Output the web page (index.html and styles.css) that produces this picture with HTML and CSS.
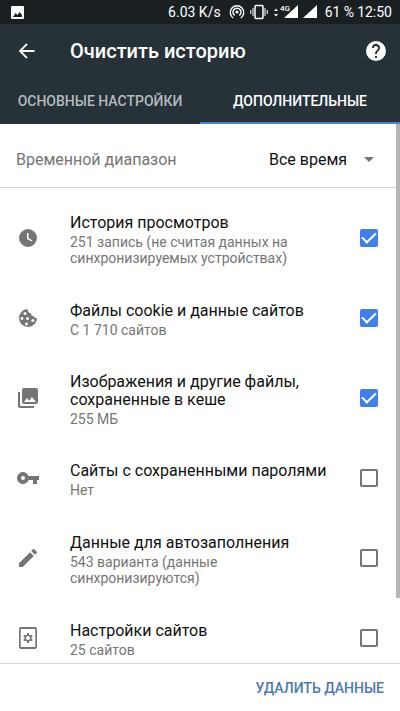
FILE: index.html
```html
<!DOCTYPE html>
<html lang="ru">
<head>
  <meta charset="UTF-8">
  <meta name="viewport" content="width=device-width, initial-scale=1">
  <title>Очистить историю</title>
  <link rel="stylesheet" href="styles.css">
</head>
<body>

  <div class="status">
    <svg class="status-picture" viewBox="0 0 13 13" width="13" height="13"><path fill="#fff" fill-rule="evenodd" d="M1 0h11a1 1 0 0 1 1 1v11a1 1 0 0 1-1 1H1a1 1 0 0 1-1-1V1a1 1 0 0 1 1-1zM2 11h9V9L8.500 6 6.500 9 4.500 7z"/></svg>
    <span>6.03 K/s</span>
    <div class="signals">
      <svg viewBox="0 0 16 16" width="16" height="16" fill="none" stroke="#fff" stroke-width="1.400"><circle cx="8" cy="8" r="1.600" fill="#fff" stroke="none"/><path d="M5.700 11.500a4 4 0 1 1 4.600 0M4.200 14a6.700 6.700 0 1 1 7.600 0"/></svg>
      <svg viewBox="0 0 18 16" width="18" height="16" fill="none" stroke="#fff"><rect x="5" y="1.500" width="8" height="13" rx="1" stroke-width="1.500"/><path d="M3 4v8M.8 6v4M15 4v8M17.200 6v4"/></svg>
      <svg viewBox="0 0 25 16" width="25" height="16" fill="#fff"><path d="M1 7l2-2.500L5 7zM1 10l2 2.500L5 10zM25 1v13H11z"/><path d="M7 0h10v8H7z" fill="#1a2022"/><text x="7" y="7" class="network">4G</text></svg>
      <svg viewBox="0 0 14 16" width="14" height="16"><path fill="#fff" d="M14 1v13H0z"/></svg>
    </div>
    <div class="clock">
      <span>61 %</span>
      <span>12:50</span>
    </div>
  </div>

  <header class="header">
    <div class="toolbar">
      <button class="icon-button" aria-label="Назад">
        <svg viewBox="0 0 16 16" width="16" height="16" fill="none" stroke="#fff" stroke-width="1.800"><path d="M15.500 8H1.500M8 1L1 8l7 7"/></svg>
      </button>
      <h1>Очистить историю</h1>
      <button class="icon-button" aria-label="Справка">
        <svg viewBox="2 2 20 20" width="20" height="20"><path fill="#fff" d="M12 2a10 10 0 1 0 0 20 10 10 0 0 0 0-20zm1 17h-2v-2h2v2zm2.070-7.750l-.9.920C13.450 12.900 13 13.500 13 15h-2v-.5c0-1.100.450-2.100 1.170-2.830l1.240-1.260A2 2 0 1 0 10 9H8a4 4 0 1 1 7.070 2.250z"/></svg>
      </button>
    </div>
    <nav class="tabs">
      <a href="#basic">Основные настройки</a>
      <a href="#advanced" class="active">Дополнительные</a>
    </nav>
  </header>

  <main class="content">
    <div class="scroll">
      <div class="range">
        <label for="range">Временной диапазон</label>
        <div class="select">
          <select id="range">
            <option>Все время</option>
          </select>
          <svg viewBox="0 0 10 5" width="10" height="5"><path fill="#757575" d="M0 0h10L5 5z"/></svg>
        </div>
      </div>

      <div class="list">
        <label class="row">
          <svg class="icon" viewBox="0 0 24 24"><path fill-rule="evenodd" d="M12 3a9 9 0 1 0 0 18 9 9 0 0 0 0-18zm-1 4h1.500v5l4 2.400-.8 1.200L11 13z"/></svg>
          <span class="text">
            <span class="title">История просмотров</span>
            <span class="sub">251 запись (не считая данных на синхронизируемых устройствах)</span>
          </span>
          <input type="checkbox" checked>
        </label>
        <label class="row">
          <svg class="icon" viewBox="0 0 24 24"><path d="M11.500 3a9 9 0 1 0 9.500 9c-1.500.5-2.800-.2-3-1.800-2 .3-3.300-1-2.800-2.900-2.200.1-3.600-1.800-3.700-4.300z"/><g fill="#fff"><circle cx="9" cy="7.500" r="1.500"/><circle cx="6" cy="12.500" r="1.400"/><circle cx="11.500" cy="12.500" r="1.500"/><circle cx="10.500" cy="18" r="1.400"/><circle cx="16.800" cy="14.500" r="1.500"/></g></svg>
          <span class="text">
            <span class="title">Файлы cookie и данные сайтов</span>
            <span class="sub">С 1 710 сайтов</span>
          </span>
          <input type="checkbox" checked>
        </label>
        <label class="row">
          <svg class="icon" viewBox="0 0 24 24"><path d="M22 16V4a2 2 0 0 0-2-2H8a2 2 0 0 0-2 2v12c0 1.100.9 2 2 2h12a2 2 0 0 0 2-2zm-11-4l2.030 2.710L16 11l4 5H8l3-4zM2 6v14c0 1.100.9 2 2 2h14v-2H4V6H2z"/></svg>
          <span class="text">
            <span class="title">Изображения и другие файлы, сохраненные в кеше</span>
            <span class="sub">255 МБ</span>
          </span>
          <input type="checkbox" checked>
        </label>
        <label class="row">
          <svg class="icon" viewBox="0 0 24 24"><path d="M12.650 10A6 6 0 1 0 12.650 14H17v4h4v-4h2v-4H12.650zM7 14a2 2 0 1 1 0-4 2 2 0 0 1 0 4z"/></svg>
          <span class="text">
            <span class="title">Сайты с сохраненными паролями</span>
            <span class="sub">Нет</span>
          </span>
          <input type="checkbox">
        </label>
        <label class="row">
          <svg class="icon" viewBox="0 0 24 24"><path d="M3 17.250V21h3.750L17.810 9.940l-3.750-3.750L3 17.250zM20.710 7.040a1 1 0 0 0 0-1.410l-2.340-2.340a1 1 0 0 0-1.410 0l-1.830 1.830 3.750 3.750 1.830-1.830z"/></svg>
          <span class="text">
            <span class="title">Данные для автозаполнения</span>
            <span class="sub">543 варианта (данные синхронизируются)</span>
          </span>
          <input type="checkbox">
        </label>
        <label class="row">
          <svg class="icon" viewBox="0 0 24 24"><path fill-rule="evenodd" d="M5 1h14a2 2 0 0 1 2 2v18a2 2 0 0 1-2 2H5a2 2 0 0 1-2-2V3c0-1.100.9-2 2-2zm-.3 1.900v18.200h14.600V2.900z"/><circle cx="12" cy="12" r="2.800" fill="none" stroke="#757575" stroke-width="1.600"/><path fill="none" stroke="#757575" stroke-width="2" d="M12 7v2M12 15v2M7.700 9.500l1.700 1M14.600 13.500l1.700 1M7.700 14.500l1.700-1M14.600 10.500l1.700-1"/></svg>
          <span class="text">
            <span class="title">Настройки сайтов</span>
            <span class="sub">25 сайтов</span>
          </span>
          <input type="checkbox">
        </label>
      </div>
    </div>
    <div class="scrollbar"></div>
  </main>

  <footer class="footer">
    <button class="delete">Удалить данные</button>
  </footer>

</body>
</html>
```
FILE: styles.css
```css
* {
  box-sizing: border-box;
}

body {
  margin: 0;
  height: 100vh;
  display: flex;
  flex-direction: column;
  background: #fff;
  color: #212121;
  font-family: Roboto, "Noto Sans", sans-serif;
}

svg {
  display: block;
  flex: none;
}

button {
  padding: 0;
  border: none;
  background: none;
  font-family: inherit;
  cursor: pointer;
}

.status {
  display: flex;
  align-items: center;
  gap: 8px;
  height: 24px;
  padding: 0 8px 0 11px;
  background: #1a2022;
  color: #fff;
  font-size: 14px;
}

.status-picture {
  margin-right: auto;
}

.signals {
  display: flex;
  gap: 5px;
}

.network {
  font-size: 8px;
  font-weight: 500;
}

.clock {
  display: flex;
  gap: 3px;
}

.header {
  background: #263238;
}

.toolbar {
  display: flex;
  align-items: center;
  height: 54px;
  padding: 0 14px 0 19px;
}

.toolbar h1 {
  flex: 1;
  margin: 0 0 0 35px;
  color: #fff;
  font-size: 20px;
  font-weight: 500;
}

.tabs {
  display: grid;
  grid-template-columns: 1fr 1fr;
  height: 46px;
}

.tabs a {
  display: flex;
  align-items: center;
  justify-content: center;
  border-top: 2px solid transparent;
  border-bottom: 2px solid transparent;
  color: #b5babd;
  font-size: 14px;
  font-weight: 500;
  text-decoration: none;
  text-transform: uppercase;
}

.tabs .active {
  border-bottom-color: #4a7fdc;
  color: #fff;
}

.content {
  position: relative;
  flex: 1;
  min-height: 0;
}

.scroll {
  height: 100%;
  overflow-y: auto;
  scrollbar-width: none;
}

.scrollbar {
  position: absolute;
  top: 0;
  right: 0;
  width: 4px;
  height: 88%;
  background: #b5b5b5;
}

.range {
  display: flex;
  align-items: center;
  justify-content: space-between;
  height: 64px;
  padding: 8px 16px 0;
  border-bottom: 1px solid #d8d8d8;
  color: #757575;
  font-size: 16px;
}

.select {
  position: relative;
}

.select select {
  appearance: none;
  padding: 0 36px 0 0;
  border: none;
  background: none;
  color: #111;
  font: inherit;
}

.select svg {
  position: absolute;
  top: 7px;
  right: 10px;
  pointer-events: none;
}

.list {
  padding: 10px 0;
}

.row {
  display: flex;
  align-items: center;
  height: 80px;
  padding: 0 22px 0 16px;
}

.icon {
  width: 24px;
  height: 24px;
  fill: #757575;
}

.text {
  flex: 1;
  margin: 0 30px;
  padding-top: 3px;
}

.title,
.sub {
  display: block;
}

.title {
  color: #111;
  font-size: 16px;
  line-height: 18px;
}

.sub {
  margin-top: 2px;
  color: #757575;
  font-size: 14px;
  line-height: 16px;
}

.row input {
  appearance: none;
  flex: none;
  width: 18px;
  height: 18px;
  margin: 0;
  border: 2px solid #757575;
  border-radius: 2px;
}

.row input:checked {
  display: grid;
  place-items: center;
  border-color: #4080e8;
  background: #4080e8;
}

.row input:checked::after {
  content: "";
  width: 12px;
  height: 6px;
  margin-bottom: 4px;
  border: solid #fff;
  border-width: 0 0 2px 2px;
  transform: rotate(-45deg);
}

.footer {
  display: flex;
  align-items: center;
  justify-content: flex-end;
  height: 48px;
  padding: 0 16px;
  border-top: 1px solid #d8d8d8;
}

.delete {
  color: #4a78b8;
  font-size: 14px;
  font-weight: 500;
  text-transform: uppercase;
}
```
